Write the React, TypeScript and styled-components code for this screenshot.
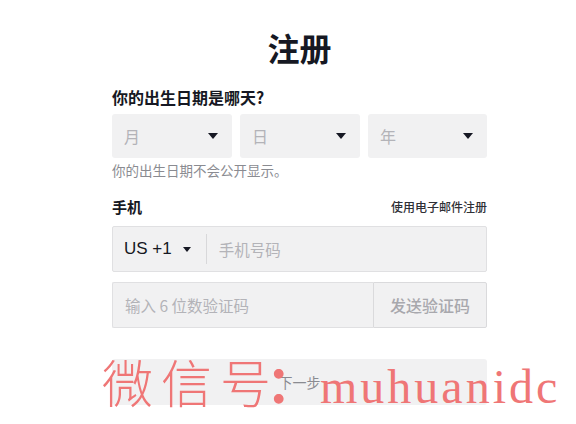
import React from 'react';
import styled, { createGlobalStyle } from 'styled-components';

const GlobalStyle = createGlobalStyle`
  html, body {
    margin: 0;
    padding: 0;
    background: #fff;
  }
  body {
    font-family: "Noto Sans CJK SC", "Noto Sans", sans-serif;
    color: #161823;
  }
`;

const Page = styled.div`
  position: relative;
  width: 576px;
  height: 424px;
  overflow: hidden;
`;

const Form = styled.div`
  width: 375px;
  margin-left: 112px;
  padding-top: 26px;
  display: flex;
  flex-direction: column;
`;

const Title = styled.h1`
  margin: 0;
  text-align: center;
  font-size: 32px;
  font-weight: 700;
  line-height: 42px;
`;

const Label = styled.div`
  margin-top: 18px;
  font-size: 16px;
  font-weight: 700;
  line-height: 22px;
`;

const SelectRow = styled.div`
  display: grid;
  grid-template-columns: 120px 120px 119px;
  gap: 8px;
  margin-top: 6px;
`;

const Select = styled.div`
  height: 44px;
  background: #f1f1f2;
  border-radius: 3px;
  display: flex;
  align-items: center;
  justify-content: space-between;
  padding: 0 14px 0 12px;
  box-sizing: border-box;
`;

const Placeholder = styled.span`
  font-size: 16px;
  color: #b3b3b8;
`;

const Caret = styled.span<{ size?: number }>`
  width: 0;
  height: 0;
  border-left: ${({ size = 5 }) => size}px solid transparent;
  border-right: ${({ size = 5 }) => size}px solid transparent;
  border-top: ${({ size = 5 }) => size + 1}px solid #161823;
`;

const Hint = styled.div`
  margin-top: 4px;
  font-size: 13.5px;
  color: #8a8b91;
  line-height: 16px;
`;

const PhoneHeader = styled.div`
  display: flex;
  justify-content: space-between;
  align-items: center;
  margin-top: 18px;
`;

const PhoneLabel = styled.span`
  font-size: 15px;
  font-weight: 700;
`;

const EmailLink = styled.span`
  font-size: 12px;
  font-weight: 500;
  color: #2f3036;
`;

const Field = styled.div`
  height: 46px;
  box-sizing: border-box;
  border: 1px solid #e0e0e2;
  background: #f1f1f2;
  border-radius: 2px;
  display: flex;
  align-items: center;
`;

const PhoneField = styled(Field)`
  margin-top: 9px;
`;

const Country = styled.div`
  display: flex;
  align-items: center;
  gap: 11px;
  padding: 0 15px 0 11px;
  font-family: "Liberation Sans", "Noto Sans CJK SC", sans-serif;
  font-size: 17px;
  color: #161823;
  border-right: 1px solid #d8d8da;
  height: 30px;
`;

const Input = styled.span`
  padding-left: 12px;
  font-size: 15.5px;
  color: #b3b3b8;
`;

const CodeRow = styled.div`
  display: flex;
  margin-top: 10px;
`;

const CodeField = styled(Field)`
  flex: 1;
  border-right: none;
  border-radius: 2px 0 0 2px;
`;

const SendButton = styled.div`
  width: 114px;
  height: 46px;
  box-sizing: border-box;
  border: 1px solid #dadadc;
  background: #f1f1f2;
  border-radius: 0 2px 2px 0;
  display: flex;
  align-items: center;
  justify-content: center;
  font-size: 16px;
  font-weight: 500;
  color: #a8a8ad;
`;

const NextButton = styled.div`
  margin-top: 31px;
  height: 46px;
  background: #f1f1f2;
  border-radius: 3px;
  display: flex;
  align-items: center;
  justify-content: center;
  font-size: 14px;
  color: #8a8b91;
`;

const Watermark = styled.div`
  position: absolute;
  left: 102px;
  top: 353px;
  display: flex;
  align-items: baseline;
  color: #ef7676;
  white-space: nowrap;
  pointer-events: none;
`;

const WatermarkCjk = styled.span<{ offset?: number }>`
  font-family: "Noto Sans CJK SC", sans-serif;
  font-weight: 300;
  font-size: 51px;
  letter-spacing: 8px;
  line-height: 56px;
  margin-left: ${({ offset = 0 }) => offset}px;
`;

const WatermarkColon = styled(WatermarkCjk)`
  font-weight: 700;
`;

const WatermarkLatin = styled.span`
  font-family: "Liberation Serif", serif;
  font-size: 48px;
  letter-spacing: 3px;
  margin-left: -5px;
`;

export default function App() {
  return (
    <Page>
      <GlobalStyle />
      <Form>
        <Title>注册</Title>
        <Label>你的出生日期是哪天?</Label>
        <SelectRow>
          {['月', '日', '年'].map((p) => (
            <Select key={p}>
              <Placeholder>{p}</Placeholder>
              <Caret />
            </Select>
          ))}
        </SelectRow>
        <Hint>你的出生日期不会公开显示。</Hint>
        <PhoneHeader>
          <PhoneLabel>手机</PhoneLabel>
          <EmailLink>使用电子邮件注册</EmailLink>
        </PhoneHeader>
        <PhoneField>
          <Country>
            US +1
            <Caret size={4} />
          </Country>
          <Input>手机号码</Input>
        </PhoneField>
        <CodeRow>
          <CodeField>
            <Input>输入 6 位数验证码</Input>
          </CodeField>
          <SendButton>发送验证码</SendButton>
        </CodeRow>
        <NextButton>下一步</NextButton>
      </Form>
      <Watermark>
        <WatermarkCjk>微信号</WatermarkCjk>
        <WatermarkColon offset={-13}>：</WatermarkColon>
        <WatermarkLatin>muhuanidc</WatermarkLatin>
      </Watermark>
    </Page>
  );
}
